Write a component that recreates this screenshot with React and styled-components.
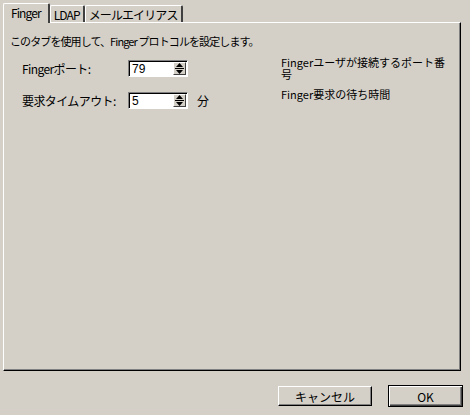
import React from 'react'
import styled, { createGlobalStyle } from 'styled-components'

const GlobalStyle = createGlobalStyle`
  body {
    margin: 0;
    background: #d4d0c8;
    font-family: "Noto Sans CJK JP", "Liberation Sans", sans-serif;
    font-size: 11px;
    color: #000;
  }
`;

const tabs = ["Finger", "LDAP", "メールエイリアス"];

const fields = [
  { label: "Fingerポート:", value: "79", unit: "", help: "Fingerユーザが接続するポート番号" },
  { label: "要求タイムアウト:", value: "5", unit: "分", help: "Finger要求の待ち時間" },
];

const SpinArrows = () => (
  <svg width="9" height="11" viewBox="0 0 9 11">
    <path d="M4.5 0 L8 4 L1 4 Z" fill="#000" />
    <rect x="0" y="5" width="9" height="1" fill="#000" />
    <path d="M1 7 L8 7 L4.5 11 Z" fill="#000" />
  </svg>
);

const SpinBox = ({ value }) => (
  <Spin>
    <SpinValue>{value}</SpinValue>
    <SpinButton>
      <SpinArrows />
    </SpinButton>
  </Spin>
);

export default function App() {
  return (
    <>
      <GlobalStyle />
      <Page>
        <TabStrip>
          {tabs.map((t, i) => (
            <Tab key={t} active={i === 0}>{t}</Tab>
          ))}
        </TabStrip>
        <Panel>
          <Intro>このタブを使用して、Finger プロトコルを設定します。</Intro>
          <Form>
            {fields.map((f) => (
              <React.Fragment key={f.label}>
                <Label>{f.label}</Label>
                <SpinBox value={f.value} />
                <Unit>{f.unit}</Unit>
                <Help>{f.help}</Help>
              </React.Fragment>
            ))}
          </Form>
        </Panel>
        <Footer>
          <Button>キャンセル</Button>
          <Button primary>OK</Button>
        </Footer>
      </Page>
    </>
  );
}

const Page = styled.div`
  width: 470px;
  height: 415px;
  box-sizing: border-box;
  padding: 3px 9px 0 3px;
  background: #d4d0c8;
`;

const TabStrip = styled.div`
  display: flex;
  align-items: flex-end;
  height: 19px;
  position: relative;
  z-index: 1;
`;

const Tab = styled.div`
  box-sizing: border-box;
  height: ${(p) => (p.active ? "20px" : "17px")};
  margin-bottom: ${(p) => (p.active ? "-1px" : "0")};
  padding: ${(p) => (p.active ? "1px 7px 0 7px" : "1px 3px 0 3px")};
  background: #d4d0c8;
  border-top: 1px solid #fff;
  border-left: 1px solid #fff;
  border-right: 2px solid #404040;
  border-top-left-radius: 2px;
  border-top-right-radius: 2px;
  line-height: 15px;
  white-space: nowrap;
  font-size: 12px;
  letter-spacing: -0.9px;
`;

const Panel = styled.div`
  box-sizing: border-box;
  height: 349px;
  border-top: 1px solid #fff;
  border-left: 1px solid #fff;
  border-right: 1px solid #000;
  border-bottom: 1px solid #000;
  box-shadow: inset -1px -1px 0 #808080;
  padding: 12px 0 0 6px;
`;

const Intro = styled.div`
  line-height: 13px;
  letter-spacing: -0.9px;
`;

const Form = styled.div`
  display: grid;
  grid-template-columns: 106px 60px 93px 168px;
  grid-auto-rows: 17px;
  row-gap: 15px;
  margin: 12px 0 0 12px;
  align-items: center;
`;

const Label = styled.div`
  font-size: 12px;
  letter-spacing: -0.6px;
  white-space: nowrap;
`;

const Spin = styled.div`
  box-sizing: border-box;
  height: 17px;
  display: flex;
  align-items: center;
  justify-content: space-between;
  background: #fff;
  border-top: 1px solid #808080;
  border-left: 1px solid #808080;
  border-right: 1px solid #fff;
  border-bottom: 1px solid #fff;
  box-shadow: inset 1px 1px 0 #000;
  padding: 0 1px 0 3px;
  font-size: 12px;
`;

const SpinValue = styled.span`
  font-family: "Liberation Sans", sans-serif;
  font-size: 12px;
`;

const SpinButton = styled.div`
  box-sizing: border-box;
  width: 13px;
  height: 13px;
  display: flex;
  align-items: center;
  justify-content: center;
  background: #d4d0c8;
  border-top: 1px solid #fff;
  border-left: 1px solid #fff;
  border-right: 1px solid #404040;
  border-bottom: 1px solid #404040;
`;

const Unit = styled.div`
  padding-left: 9px;
  font-size: 12px;
`;

const Help = styled.div`
  align-self: start;
  margin-top: -4px;
  line-height: 12px;
  letter-spacing: 0;
  font-size: 11px;
`;

const Footer = styled.div`
  display: flex;
  justify-content: flex-end;
  gap: 16px;
  margin: 15px -2px 0 0;
`;

const Button = styled.button`
  box-sizing: border-box;
  width: ${(p) => (p.primary ? "75px" : "94px")};
  height: ${(p) => (p.primary ? "22px" : "20px")};
  margin-top: ${(p) => (p.primary ? "-1px" : "0")};
  background: #d4d0c8;
  font-family: "Noto Sans CJK JP", "Liberation Sans", sans-serif;
  font-size: 12px;
  color: #000;
  padding: 0;
  border-top: 1px solid #fff;
  border-left: 1px solid #fff;
  border-right: 1px solid #000;
  border-bottom: 1px solid #000;
  box-shadow: inset -1px -1px 0 #808080;
  ${(p) => p.primary && `border: 1px solid #000; box-shadow: inset 1px 1px 0 #fff, inset -1px -1px 0 #404040, inset -2px -2px 0 #808080;`}
`;
